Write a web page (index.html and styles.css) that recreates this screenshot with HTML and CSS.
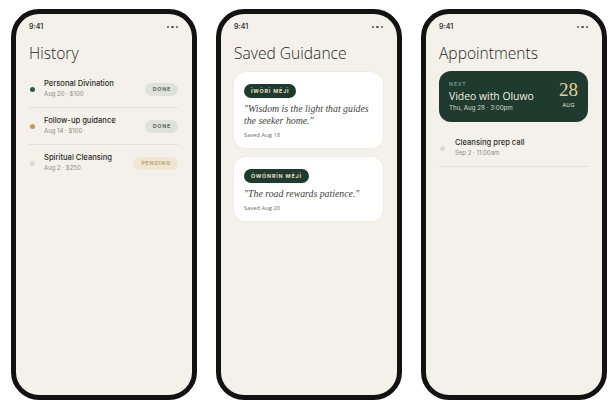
FILE: index.html
```html
<!DOCTYPE html>
<html lang="en">
<head>
<meta charset="utf-8">
<title>Screens</title>
<link rel="stylesheet" href="styles.css">
</head>
<body>
<div class="row">
  <section class="phone">
    <div class="status"><span class="time">9:41</span><span class="dots"><i></i><i></i><i></i></span></div>
    <h1 class="title">History</h1>
    <ul class="list">
      <li class="item">
        <span class="dot dot-green"></span>
        <div class="item-text"><div class="item-title">Personal Divination</div><div class="item-sub">Aug 20 · $100</div></div>
        <span class="badge badge-done">DONE</span>
      </li>
      <li class="item">
        <span class="dot dot-gold"></span>
        <div class="item-text"><div class="item-title">Follow-up guidance</div><div class="item-sub">Aug 14 · $100</div></div>
        <span class="badge badge-done">DONE</span>
      </li>
      <li class="item item-plain">
        <span class="dot dot-grey"></span>
        <div class="item-text"><div class="item-title">Spiritual Cleansing</div><div class="item-sub">Aug 2 · $250</div></div>
        <span class="badge badge-pending">PENDING</span>
      </li>
    </ul>
  </section>

  <section class="phone">
    <div class="status"><span class="time">9:41</span><span class="dots"><i></i><i></i><i></i></span></div>
    <h1 class="title">Saved Guidance</h1>
    <div class="cards">
      <article class="card">
        <span class="tag">ÌWÒRÌ MÉJÌ</span>
        <p class="quote">"Wisdom is the light that guides the seeker home."</p>
        <div class="saved">Saved Aug 18</div>
      </article>
      <article class="card">
        <span class="tag">ÒWÓNRÍN MÉJÌ</span>
        <p class="quote">"The road rewards patience."</p>
        <div class="saved">Saved Aug 20</div>
      </article>
    </div>
  </section>

  <section class="phone">
    <div class="status"><span class="time">9:41</span><span class="dots"><i></i><i></i><i></i></span></div>
    <h1 class="title">Appointments</h1>
    <div class="next">
      <div class="next-main">
        <div class="next-label">NEXT</div>
        <div class="next-title">Video with Oluwo</div>
        <div class="next-sub">Thu, Aug 28 · 3:00pm</div>
      </div>
      <div class="next-date">
        <div class="next-day">28</div>
        <div class="next-month">AUG</div>
      </div>
    </div>
    <ul class="list list-appt">
      <li class="item">
        <span class="dot dot-grey"></span>
        <div class="item-text"><div class="item-title">Cleansing prep call</div><div class="item-sub">Sep 2 · 11:00am</div></div>
      </li>
    </ul>
  </section>
</div>
</body>
</html>
```

FILE: styles.css
```css
* { box-sizing: border-box; }

html, body {
  margin: 0;
  padding: 0;
  background: #ffffff;
}

body {
  font-family: "Inter", "Liberation Sans", sans-serif;
  color: #2b2c29;
  overflow: hidden;
  width: 611px;
  height: 408px;
}

.row {
  display: flex;
  gap: 19px;
  padding: 9px 0 0 11px;
}

.phone {
  flex: 0 0 186px;
  width: 186px;
  height: 391px;
  border: 5px solid #121212;
  border-radius: 28px;
  background: #f3f1e9;
  padding: 0 14px 0 13px;
  overflow: hidden;
}

.status {
  display: flex;
  justify-content: space-between;
  align-items: center;
  padding-top: 8px;
  height: 18px;
}

.time {
  font-size: 7px;
  font-weight: 600;
  color: #333;
  line-height: 10px;
}

.dots {
  display: flex;
  gap: 2px;
}

.dots i {
  display: block;
  width: 2.4px;
  height: 2.4px;
  border-radius: 50%;
  background: #555553;
}

.title {
  margin: 11px 0 0;
  font-family: "Open Sans", "Liberation Sans", sans-serif;
  font-weight: 300;
  font-size: 15.6px;
  line-height: 20px;
  color: #262926;
}

.list {
  list-style: none;
  margin: 8px 0 0;
  padding: 0;
}

.item {
  display: flex;
  align-items: center;
  padding: 8px 0;
  border-bottom: 1px solid #e3dfd4;
}

.item-plain {
  border-bottom: none;
}

.dot {
  flex: 0 0 5px;
  width: 5px;
  height: 5px;
  border-radius: 50%;
  margin: 0 9px 0 1px;
}

.dot-green { background: #2f5b46; }
.dot-gold { background: #c29b55; }
.dot-grey { background: #dad7d0; }

.item-text {
  flex: 1;
  min-width: 0;
}

.item-title {
  font-size: 7.6px;
  font-weight: 500;
  line-height: 10px;
  color: #2b2c29;
}

.item-sub {
  font-size: 6px;
  line-height: 10px;
  color: #8c8b85;
}

.badge {
  font-size: 5.3px;
  font-weight: 700;
  letter-spacing: 0.8px;
  line-height: 13px;
  height: 13px;
  padding: 0 7px 0 8px;
  border-radius: 7px;
}

.badge-done {
  background: #dee2da;
  color: #5e6c62;
}

.badge-pending {
  background: #efe6d3;
  color: #c0a56f;
}

.cards {
  display: flex;
  flex-direction: column;
  gap: 9px;
  margin-top: 9px;
}

.card {
  display: flex;
  flex-direction: column;
  align-items: flex-start;
  background: #ffffff;
  border-radius: 12px;
  padding: 12px 9px 9px 10px;
  box-shadow: 0 0 0 1px #efece4;
}

.tag {
  display: block;
  background: #1f3a2e;
  color: #eadfc4;
  font-size: 5.4px;
  font-weight: 700;
  letter-spacing: 0.8px;
  line-height: 14px;
  height: 14px;
  padding: 0 7px;
  border-radius: 7px;
}

.quote {
  margin: 5px 0 0;
  font-family: "Liberation Serif", "DejaVu Serif", serif;
  font-style: italic;
  font-size: 9.8px;
  line-height: 12px;
  color: #3e3f3b;
}

.saved {
  margin-top: 4px;
  font-family: "Open Sans", "Liberation Sans", sans-serif;
  font-size: 5.8px;
  line-height: 8px;
  color: #6e6d68;
}

.next {
  margin-top: 8px;
  display: flex;
  justify-content: space-between;
  align-items: flex-start;
  background: #1f3b2f;
  border-radius: 12px;
  height: 51px;
  padding: 9px 10px 0 10px;
}

.next-label {
  font-size: 5.2px;
  letter-spacing: 1px;
  line-height: 8px;
  color: #9fb2a5;
}

.next-title {
  font-family: "Open Sans", "Liberation Sans", sans-serif;
  font-size: 10.4px;
  line-height: 14px;
  color: #f4efe3;
  margin-top: 1px;
}

.next-sub {
  font-size: 6.2px;
  line-height: 9px;
  color: #dcd8cb;
}

.next-date {
  display: flex;
  flex-direction: column;
  align-items: center;
}

.next-day {
  font-family: "Liberation Serif", "DejaVu Serif", serif;
  font-size: 19px;
  line-height: 20px;
  color: #e4d09d;
}

.next-month {
  font-size: 5.2px;
  line-height: 9px;
  letter-spacing: 0.3px;
  color: #e8e3d5;
  margin-top: 1px;
}

.list-appt {
  margin-top: 8px;
}

.list-appt .dot {
  margin: 0 10px 0 1px;
}
```
